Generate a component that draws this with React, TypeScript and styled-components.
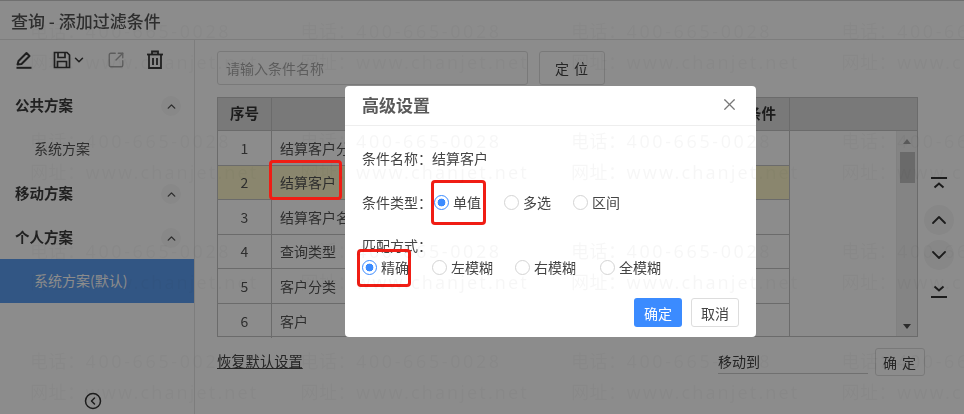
import React from 'react';
import styled, { createGlobalStyle } from 'styled-components';
import { ChevronDown, ChevronUp, CircleChevronLeft, SquareArrowOutUpRight, X } from 'lucide-react';

const GlobalStyle = createGlobalStyle`
    html, body {
        margin: 0;
        padding: 0;
        background: #fff;
    }
    body {
        font-family: "Noto Sans CJK SC", "Noto Sans", sans-serif;
        font-size: 14px;
        color: #333;
    }
    * {
        box-sizing: border-box;
    }
`;

const Page = styled.div`
    position: relative;
    width: 964px;
    height: 414px;
    overflow: hidden;
    display: flex;
    flex-direction: column;
    filter: blur(0.4px);
`;

const Header = styled.div`
    height: 40px;
    flex: none;
    display: flex;
    align-items: center;
    padding-left: 11px;
    border-top: 1px solid #ccc;
    border-bottom: 1px solid #e4e4e4;
    font-size: 17px;
    font-weight: 500;
    color: #555;
`;

const Main = styled.div`
    flex: 1;
    display: flex;
    min-height: 0;
`;

const Sidebar = styled.div`
    width: 195px;
    flex: none;
    display: flex;
    flex-direction: column;
    border-right: 1px solid #e4e4e4;
`;

const Toolbar = styled.div`
    height: 43px;
    flex: none;
    display: flex;
    align-items: center;
    padding: 0 0 4px 14px;
`;

const ToolIcon = styled.span<{ $gap?: number; $faint?: boolean }>`
    display: flex;
    align-items: center;
    margin-left: ${(p) => p.$gap ?? 0}px;
    color: ${(p) => (p.$faint ? '#aaa' : '#3a3a3a')};
`;

const SectionTitle = styled.div`
    height: 44px;
    flex: none;
    display: flex;
    align-items: center;
    justify-content: space-between;
    padding: 0 13px 2px 15px;
    font-size: 14.5px;
    font-weight: 700;
    color: #3c3c3c;
`;

const ChevronBadge = styled.span`
    width: 20px;
    height: 20px;
    margin-top: 4px;
    display: flex;
    align-items: center;
    justify-content: center;
    border-radius: 50%;
    background: #f8f8f8;
    color: #555;
`;

const SectionItem = styled.div<{ $active?: boolean }>`
    height: 44px;
    flex: none;
    display: flex;
    align-items: center;
    padding: 0 0 2px 34px;
    font-size: 14px;
    background: ${(p) => (p.$active ? '#5c9df0' : 'transparent')};
    color: ${(p) => (p.$active ? '#fff' : '#555')};
`;

const Collapse = styled.div`
    margin-top: auto;
    padding: 0 8px 4px 0;
    display: flex;
    justify-content: center;
    color: #333;
`;

const Content = styled.div`
    flex: 1;
    display: flex;
    flex-direction: column;
    padding: 11px 0 0 22px;
`;

const SearchRow = styled.div`
    display: flex;
    gap: 11px;
    height: 34px;
`;

const SearchInput = styled.div`
    width: 311px;
    display: flex;
    align-items: center;
    padding-left: 8px;
    border: 1px solid #ddd;
    border-radius: 3px;
    color: #aaa;
    font-size: 14px;
`;

const PlainButton = styled.div<{ $width: number; $height: number }>`
    width: ${(p) => p.$width}px;
    height: ${(p) => p.$height}px;
    display: flex;
    align-items: center;
    justify-content: center;
    border: 1px solid #ddd;
    border-radius: 3px;
    font-size: 14px;
    letter-spacing: 1px;
    color: #444;
    background: #fff;
`;

const TableRow = styled.div`
    display: flex;
    margin-top: 12px;
`;

const Table = styled.div`
    width: 701px;
    height: 240px;
    flex: none;
    display: flex;
    flex-direction: column;
    border: 1px solid #c4c4c4;
`;

const HeadRow = styled.div`
    height: 33px;
    flex: none;
    display: flex;
    background: #dcdcdc;
    font-weight: 700;
    font-size: 14.5px;
    color: #333;
    border-bottom: 1px solid #c4c4c4;
`;

const HeadIndex = styled.div`
    width: 54px;
    display: flex;
    align-items: center;
    justify-content: center;
    padding-bottom: 3px;
    border-right: 1px solid #c4c4c4;
`;

const HeadName = styled.div`
    width: 518px;
    display: flex;
    align-items: center;
    justify-content: flex-end;
    padding: 0 13px 3px 0;
    border-right: 1px solid #c4c4c4;
`;

const BodyWrap = styled.div`
    flex: 1;
    display: flex;
    min-height: 0;
`;

const Rows = styled.div`
    width: 572px;
    flex: none;
    border-right: 1px solid #c4c4c4;
`;

const Row = styled.div<{ $selected?: boolean }>`
    height: 34.5px;
    display: flex;
    border-bottom: 1px solid #c4c4c4;
    background: ${(p) => (p.$selected ? '#fbf5c8' : 'transparent')};
    &:last-child {
        border-bottom: none;
    }
`;

const IndexCell = styled.div`
    width: 54px;
    display: flex;
    align-items: center;
    justify-content: center;
    border-right: 1px solid #c4c4c4;
    color: #555;
`;

const NameCell = styled.div`
    flex: 1;
    display: flex;
    align-items: center;
    padding-left: 8px;
    color: #555;
`;

const Blank = styled.div`
    flex: 1;
`;

const Scrollbar = styled.div`
    width: 21px;
    flex: none;
    display: flex;
    flex-direction: column;
    align-items: center;
    padding-top: 8px;
    background: #f1f1f1;
    border-left: 1px solid #ececec;
`;

const ArrowUp = styled.span`
    width: 0;
    height: 0;
    border-left: 4px solid transparent;
    border-right: 4px solid transparent;
    border-bottom: 5px solid #a3a3a3;
`;

const ArrowDown = styled.span`
    width: 0;
    height: 0;
    margin-top: auto;
    margin-bottom: 7px;
    border-left: 4px solid transparent;
    border-right: 4px solid transparent;
    border-top: 5px solid #505050;
`;

const Thumb = styled.span`
    width: 15px;
    height: 31px;
    margin-top: 8px;
    background: #c1c1c1;
`;

const MoveColumn = styled.div`
    width: 42px;
    display: flex;
    flex-direction: column;
    align-items: center;
    padding-top: 71px;
    gap: 5px;
    color: #333;
`;

const MoveButton = styled.span<{ $round?: boolean; $tall?: boolean }>`
    width: 30px;
    height: ${(p) => (p.$tall ? 32 : 30)}px;
    display: flex;
    align-items: center;
    justify-content: center;
    border-radius: 50%;
    background: ${(p) => (p.$round ? '#f6f6f6' : 'transparent')};
`;

const BottomRow = styled.div`
    display: flex;
    align-items: flex-start;
    height: 28px;
    margin-top: 11px;
`;

const ResetLink = styled.span`
    height: 26px;
    line-height: 26px;
    text-decoration: underline;
    font-size: 14.3px;
    color: #444;
`;

const MoveField = styled.div`
    width: 150px;
    height: 26px;
    margin-left: auto;
    display: flex;
    align-items: center;
    border-bottom: 1px solid #ccc;
    color: #444;
`;

const ConfirmSlot = styled.div`
    margin: 0 39px 0 7px;
`;

const Dim = styled.div`
    position: absolute;
    inset: 0;
    background: rgba(0, 0, 0, 0.45);
`;

const Dialog = styled.div`
    position: absolute;
    left: 345px;
    top: 86px;
    width: 411px;
    height: 251px;
    display: flex;
    flex-direction: column;
    background: #fff;
    border-radius: 4px;
    color: #444;
`;

const DialogHead = styled.div`
    height: 40px;
    flex: none;
    display: flex;
    align-items: center;
    justify-content: space-between;
    padding: 0 17px 2px 17px;
    border-bottom: 1px solid #eee;
    font-size: 17px;
    font-weight: 700;
    color: #5a5a5a;
`;

const DialogBody = styled.div`
    flex: 1;
    display: flex;
    flex-direction: column;
    padding: 0 17px 10px;
`;

const NameLine = styled.div`
    height: 20px;
    margin-top: 22px;
    display: flex;
    align-items: center;
`;

const TypeLine = styled.div`
    height: 20px;
    margin-top: 24px;
    display: flex;
    align-items: center;
`;

const TypeLabel = styled.span`
    width: 72px;
    flex: none;
`;

const MatchLabel = styled.div`
    height: 20px;
    margin-top: 23px;
    display: flex;
    align-items: center;
`;

const MatchLine = styled.div`
    height: 20px;
    margin-top: 2px;
    display: flex;
    align-items: center;
`;

const RadioItem = styled.span<{ $width: number }>`
    width: ${(p) => p.$width}px;
    flex: none;
    display: flex;
    align-items: center;
    gap: 4px;
`;

const RadioDot = styled.span<{ $checked?: boolean }>`
    width: 15px;
    height: 15px;
    flex: none;
    border-radius: 50%;
    border: 1px solid ${(p) => (p.$checked ? '#3b8bff' : '#d4d4d4')};
    background: ${(p) => (p.$checked ? 'radial-gradient(circle, #3b8bff 0, #3b8bff 3.6px, #fff 4.2px)' : '#fff')};
`;

const DialogActions = styled.div`
    margin-top: auto;
    display: flex;
    justify-content: flex-end;
    gap: 9px;
`;

const PrimaryButton = styled.div`
    width: 48px;
    height: 29px;
    display: flex;
    align-items: center;
    justify-content: center;
    border-radius: 3px;
    background: #3b8bff;
    color: #fff;
`;

const CancelButton = styled(PrimaryButton)`
    background: #fff;
    color: #444;
    border: 1px solid #ddd;
`;

const RedBox = styled.div<{ $x: number; $y: number; $w: number; $h: number }>`
    position: absolute;
    left: ${(p) => p.$x}px;
    top: ${(p) => p.$y}px;
    width: ${(p) => p.$w}px;
    height: ${(p) => p.$h}px;
    border: 3.5px solid #f01d14;
    border-radius: 4px;
`;

const Watermarks = styled.div`
    position: absolute;
    inset: 0;
    padding: 15px 0 0 30px;
    display: grid;
    grid-template-columns: repeat(4, 270.5px);
    grid-auto-rows: 110px;
    pointer-events: none;
    font-size: 18px;
    letter-spacing: 0.5px;
    line-height: 30px;
    color: rgba(0, 0, 0, 0.035);
    white-space: nowrap;
    overflow: hidden;
`;

const Mark = styled.div`
    display: flex;
    flex-direction: column;
`;

const MarkLine = styled.span`
    display: block;
`;

const MarkLatin = styled.span<{ $spacing: number }>`
    font-family: "Noto Sans", sans-serif;
    letter-spacing: ${(p) => p.$spacing}px;
`;

const PenIcon = () => (
    <svg width="20" height="20" viewBox="0 0 20 20" fill="none" stroke="currentColor" strokeWidth="2" strokeLinejoin="round">
        <path d="M3.5 14.5L4.5 11 12.5 3l3 3-8 8z" />
        <path d="M2.5 17.8h15" />
    </svg>
);

const SaveIcon = () => (
    <svg width="20" height="20" viewBox="0 0 20 20" fill="none" stroke="currentColor" strokeWidth="1.7">
        <path d="M2.5 2.5h12.5l2.5 2.5v12.5h-15z" />
        <path d="M6 2.5v5h7v-5" />
        <path d="M5.5 17.5v-6h9v6" />
    </svg>
);

const TrashIcon = () => (
    <svg width="20" height="20" viewBox="0 0 20 20" fill="none" stroke="currentColor" strokeWidth="1.8">
        <path d="M2 4.5h16" />
        <path d="M7 4.5v-3h6v3" />
        <path d="M4 4.5v13.5h12v-13.5" />
        <path d="M8 8v7M12 8v7" />
    </svg>
);

const TopLine = () => (
    <svg width="24" height="24" viewBox="0 0 24 24" fill="none" stroke="currentColor" strokeWidth="2">
        <path d="M4 6h16" />
        <path d="M7.5 15.5l4.5-4 4.5 4" />
    </svg>
);

const BottomLine = () => (
    <svg width="24" height="24" viewBox="0 0 24 24" fill="none" stroke="currentColor" strokeWidth="2">
        <path d="M4 19h16" />
        <path d="M7.5 8.5l4.5 4 4.5-4" />
    </svg>
);

const COLON = '\uFF1A';

const rows = ['结算客户分类', '结算客户', '结算客户名称', '查询类型', '客户分类', '客户'];
const types = [
    { label: '单值', width: 70, checked: true },
    { label: '多选', width: 69, checked: false },
    { label: '区间', width: 60, checked: false },
];
const matches = [
    { label: '精确', width: 70, checked: true },
    { label: '左模糊', width: 83, checked: false },
    { label: '右模糊', width: 85, checked: false },
    { label: '全模糊', width: 70, checked: false },
];

export default function App() {
    return (
        <Page>
            <GlobalStyle />
            <Header>查询 - 添加过滤条件</Header>
            <Main>
                <Sidebar>
                    <Toolbar>
                        <ToolIcon><PenIcon /></ToolIcon>
                        <ToolIcon $gap={18}><SaveIcon /></ToolIcon>
                        <ToolIcon><ChevronDown size={14} strokeWidth={2.6} /></ToolIcon>
                        <ToolIcon $gap={21} $faint><SquareArrowOutUpRight size={18} strokeWidth={1.8} /></ToolIcon>
                        <ToolIcon $gap={20}><TrashIcon /></ToolIcon>
                    </Toolbar>
                    <SectionTitle>公共方案<ChevronBadge><ChevronUp size={13} strokeWidth={2.6} /></ChevronBadge></SectionTitle>
                    <SectionItem>系统方案</SectionItem>
                    <SectionTitle>移动方案<ChevronBadge><ChevronUp size={13} strokeWidth={2.6} /></ChevronBadge></SectionTitle>
                    <SectionTitle>个人方案<ChevronBadge><ChevronUp size={13} strokeWidth={2.6} /></ChevronBadge></SectionTitle>
                    <SectionItem $active>系统方案(默认)</SectionItem>
                    <Collapse><CircleChevronLeft size={18} strokeWidth={2} /></Collapse>
                </Sidebar>
                <Content>
                    <SearchRow>
                        <SearchInput>请输入条件名称</SearchInput>
                        <PlainButton $width={66} $height={34}>定 位</PlainButton>
                    </SearchRow>
                    <TableRow>
                        <Table>
                            <HeadRow>
                                <HeadIndex>序号</HeadIndex>
                                <HeadName>条件</HeadName>
                            </HeadRow>
                            <BodyWrap>
                                <Rows>
                                    {rows.map((name, i) => (
                                        <Row key={name} $selected={i === 1}>
                                            <IndexCell>{i + 1}</IndexCell>
                                            <NameCell>{name}</NameCell>
                                        </Row>
                                    ))}
                                </Rows>
                                <Blank />
                                <Scrollbar>
                                    <ArrowUp />
                                    <Thumb />
                                    <ArrowDown />
                                </Scrollbar>
                            </BodyWrap>
                        </Table>
                        <MoveColumn>
                            <MoveButton $tall><TopLine /></MoveButton>
                            <MoveButton $round><ChevronUp size={24} strokeWidth={1.8} /></MoveButton>
                            <MoveButton $round><ChevronDown size={24} strokeWidth={1.8} /></MoveButton>
                            <MoveButton><BottomLine /></MoveButton>
                        </MoveColumn>
                    </TableRow>
                    <BottomRow>
                        <ResetLink>恢复默认设置</ResetLink>
                        <MoveField>移动到</MoveField>
                        <ConfirmSlot><PlainButton $width={50} $height={28}>确 定</PlainButton></ConfirmSlot>
                    </BottomRow>
                </Content>
            </Main>
            <Dim />
            <Dialog>
                <DialogHead>高级设置<X size={19} strokeWidth={1.5} color="#777" /></DialogHead>
                <DialogBody>
                    <NameLine>{`条件名称${COLON}结算客户`}</NameLine>
                    <TypeLine>
                        <TypeLabel>{`条件类型${COLON}`}</TypeLabel>
                        {types.map((t) => (
                            <RadioItem key={t.label} $width={t.width}>
                                <RadioDot $checked={t.checked} />{t.label}
                            </RadioItem>
                        ))}
                    </TypeLine>
                    <MatchLabel>{`匹配方式${COLON}`}</MatchLabel>
                    <MatchLine>
                        {matches.map((m) => (
                            <RadioItem key={m.label} $width={m.width}>
                                <RadioDot $checked={m.checked} />{m.label}
                            </RadioItem>
                        ))}
                    </MatchLine>
                    <DialogActions>
                        <PrimaryButton>确定</PrimaryButton>
                        <CancelButton>取消</CancelButton>
                    </DialogActions>
                </DialogBody>
            </Dialog>
            <RedBox $x={269} $y={160} $w={73} $h={40} />
            <RedBox $x={431} $y={180} $w={55} $h={45} />
            <RedBox $x={357} $y={249} $w={54} $h={38} />
            <Watermarks>
                {Array.from({ length: 16 }).map((_, i) => (
                    <Mark key={i}>
                        <MarkLine>{`电话${COLON}`}<MarkLatin $spacing={2.6}>400-665-0028</MarkLatin></MarkLine>
                        <MarkLine>{`网址${COLON}`}<MarkLatin $spacing={2.1}>www.chanjet.net</MarkLatin></MarkLine>
                    </Mark>
                ))}
            </Watermarks>
        </Page>
    );
}
